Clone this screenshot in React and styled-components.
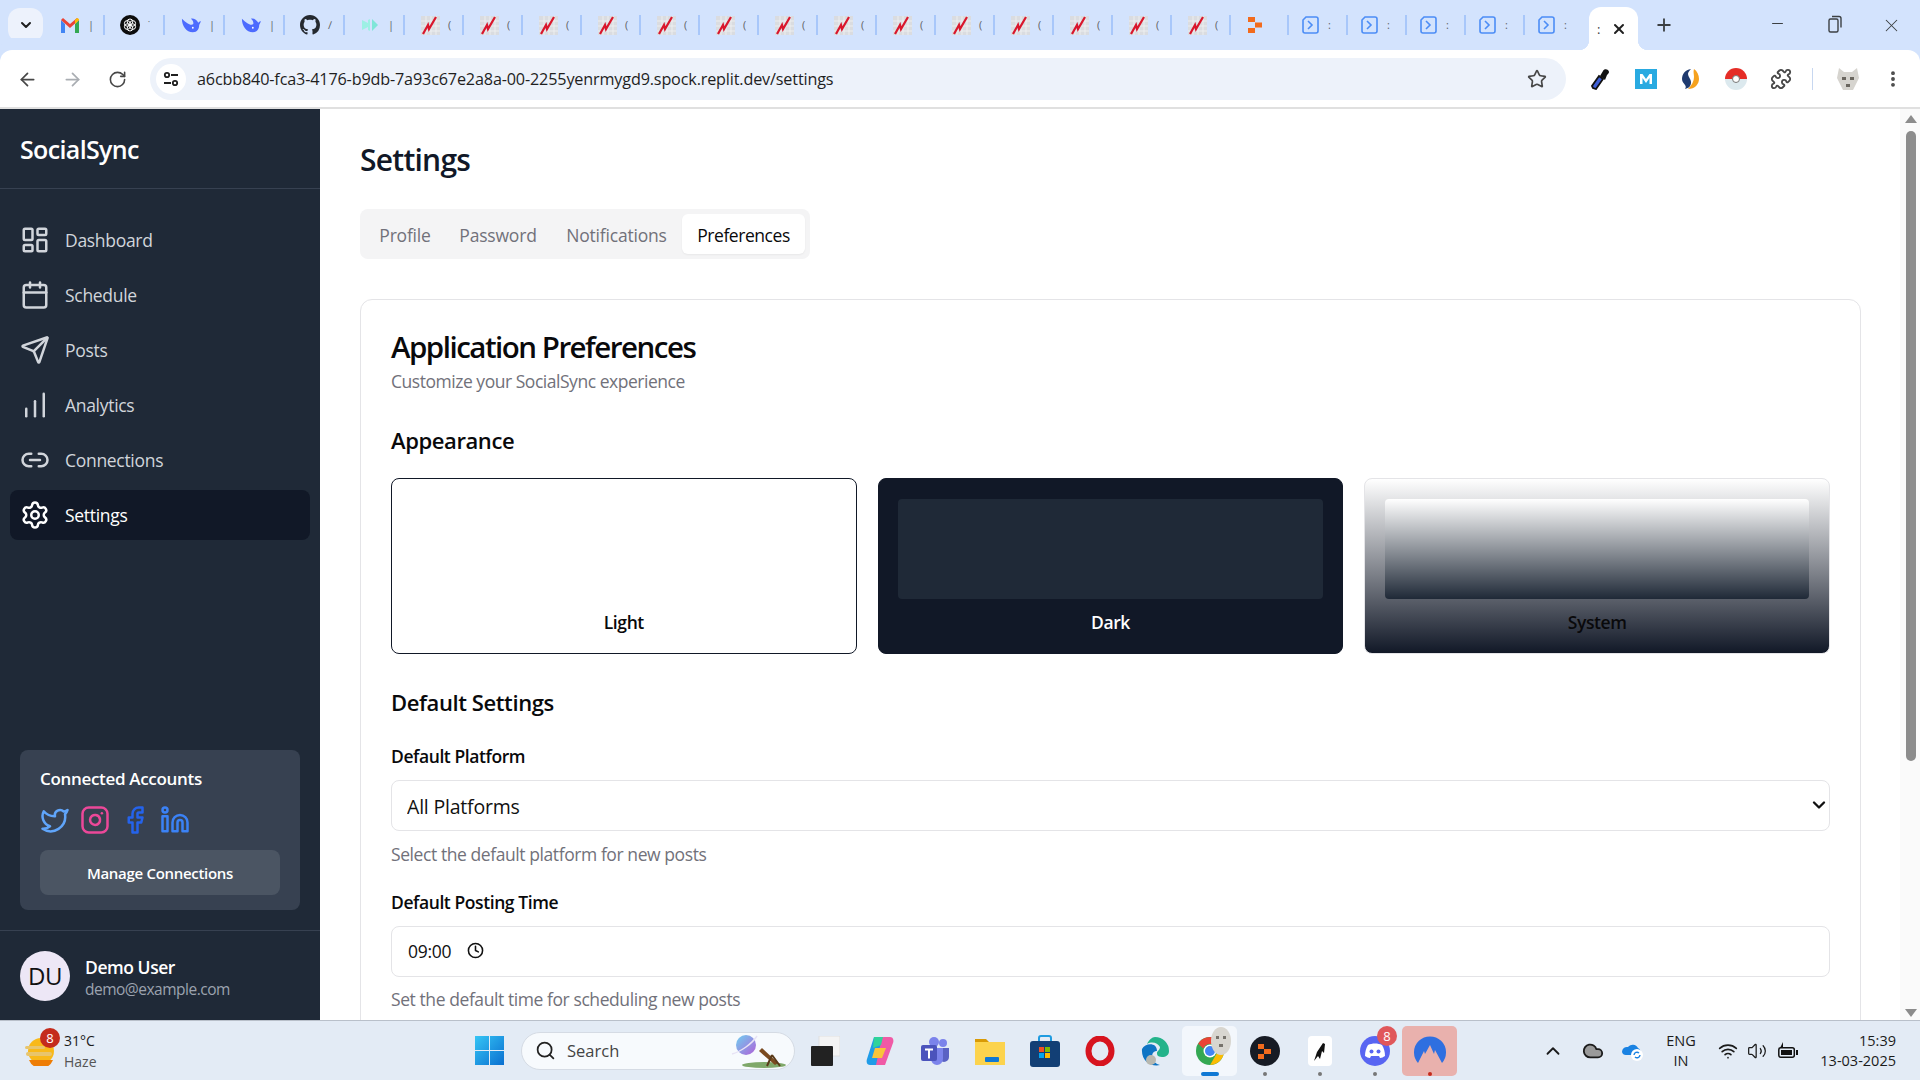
import React from 'react';
import styled, { createGlobalStyle } from 'styled-components';
import {
  LayoutDashboard, Calendar, Send, ChartNoAxesColumnIncreasing, Link2, Settings,
  Twitter, Instagram, Facebook, Linkedin, Clock,
  ArrowLeft, ArrowRight, RotateCw, Star, Puzzle, MoreVertical, X, Plus, Minus,
  ChevronDown, ChevronUp, Search, Cloud, Wifi, Volume2,
} from 'lucide-react';

const GlobalStyle = createGlobalStyle`
  html, body { margin: 0; padding: 0; height: 100%; overflow: hidden; background: #fff; }
  body { font-family: "Open Sans", "Noto Sans", sans-serif; color: #111827; }
  * { box-sizing: border-box; }
`;

const Screen = styled.div`
  width: 1920px;
  height: 1080px;
  display: flex;
  flex-direction: column;
  overflow: hidden;
`;

/* browser chrome */
const TabStrip = styled.div`
  height: 50px;
  flex: none;
  background: #d3e3fd;
  display: flex;
  align-items: center;
  padding-left: 8px;
`;

const TabSearch = styled.div`
  width: 35px;
  height: 34px;
  margin: 0 2px 0 0;
  border-radius: 12px;
  background: #edf2fc;
  display: flex;
  align-items: center;
  justify-content: center;
  color: #1f1f1f;
`;

const Tab = styled.div`
  width: ${p => p.$w}px;
  height: 20px;
  flex: none;
  display: flex;
  align-items: center;
  padding-left: ${p => p.$pad}px;
  border-right: 2px solid ${p => (p.$last ? 'transparent' : '#a8c7fa')};
`;

const TabIconBox = styled.div`
  width: 20px;
  flex: none;
  display: flex;
  justify-content: center;
`;

const TabFrag = styled.span`
  margin-left: 8px;
  font-size: 11px;
  line-height: 12px;
  color: #5f6368;
`;

const ActiveTab = styled.div`
  position: relative;
  align-self: flex-end;
  width: 49px;
  height: 43px;
  margin-left: 5px;
  background: #fff;
  border-radius: 12px 12px 0 0;
  display: flex;
  align-items: center;
  padding-left: 8px;
  gap: 11px;
  font-size: 13px;
  color: #3c4043;
  &::before, &::after {
    content: '';
    position: absolute;
    bottom: 0;
    width: 10px;
    height: 10px;
  }
  &::before { left: -10px; background: radial-gradient(circle at 0 0, transparent 10px, #fff 10.5px); }
  &::after { right: -10px; background: radial-gradient(circle at 100% 0, transparent 10px, #fff 10.5px); }
`;

const NewTab = styled.div`
  margin-left: 16px;
  color: #3c4043;
  display: flex;
`;

const WindowButtons = styled.div`
  margin-left: auto;
  display: flex;
  color: #3c4043;
`;

const WindowButton = styled.div`
  width: 57px;
  display: flex;
  justify-content: center;
`;

const Toolbar = styled.div`
  height: 59px;
  flex: none;
  background: #fff;
  border-bottom: 2px solid #e0e0e0;
  border-radius: 12px 12px 0 0;
  padding-top: 1px;
  display: flex;
  align-items: center;
  color: #474747;
  box-shadow: 0 -12px 0 #d3e3fd;
`;

const NavIcon = styled.div`
  width: 45px;
  display: flex;
  justify-content: center;
  color: ${p => (p.$off ? '#a9adb2' : '#474747')};
  margin-left: ${p => (p.$first ? '5px' : '0')};
`;

const Omnibox = styled.div`
  width: 1416px;
  height: 42px;
  margin-left: 10px;
  border-radius: 21px;
  background: #edf2fa;
  display: flex;
  align-items: center;
  padding: 0 19px 0 6px;
`;

const SiteInfo = styled.div`
  width: 30px;
  height: 30px;
  border-radius: 50%;
  background: #fff;
  display: flex;
  align-items: center;
  justify-content: center;
  color: #1f1f1f;
`;

const Url = styled.div`
  margin-left: 11px;
  flex: 1;
  font-size: 16.2px;
  letter-spacing: -0.16px;
  color: #1f1f1f;
  white-space: nowrap;
`;

const ExtRow = styled.div`
  margin-left: 12px;
  display: flex;
  align-items: center;
`;

const ExtIcon = styled.div`
  width: 45px;
  display: flex;
  justify-content: center;
`;

const ToolSep = styled.div`
  width: 1px;
  height: 22px;
  background: #c7d7f0;
  margin: 0 22px 0 9px;
`;

const Kebab = styled.div`
  margin-left: 22px;
  display: flex;
`;

/* page */
const Body = styled.div`
  flex: 1;
  min-height: 0;
  display: flex;
`;

const Sidebar = styled.aside`
  width: 320px;
  flex: none;
  background: #1f2937;
  display: flex;
  flex-direction: column;
`;

const Brand = styled.div`
  height: 80px;
  flex: none;
  border-bottom: 1px solid #374151;
  padding: 0 20px;
  display: flex;
  align-items: center;
  font-size: 25px;
  font-weight: 600;
  letter-spacing: -0.65px;
  color: #fff;
`;

const Nav = styled.nav`
  padding: 26px 10px 0;
  display: flex;
  flex-direction: column;
  gap: 5px;
`;

const NavItem = styled.div`
  height: 50px;
  padding: 0 10px;
  display: flex;
  align-items: center;
  gap: 15px;
  border-radius: 8px;
  font-size: 17.5px;
  font-weight: 500;
  letter-spacing: -0.3px;
  color: ${p => (p.$active ? '#fff' : '#d1d5db')};
  background: ${p => (p.$active ? '#111827' : 'transparent')};
  svg { flex: none; }
`;

const AccountsCard = styled.div`
  margin: auto 20px 20px;
  height: 160px;
  flex: none;
  background: #374151;
  border-radius: 8px;
  padding: 15px 20px 0;
`;

const AccountsTitle = styled.div`
  font-size: 17px;
  line-height: 28px;
  font-weight: 600;
  letter-spacing: -0.32px;
  color: #fff;
`;

const AccountIcons = styled.div`
  display: flex;
  gap: 10px;
  margin-top: 12px;
`;

const ManageButton = styled.div`
  height: 45px;
  margin-top: 15px;
  border-radius: 8px;
  background: #4b5563;
  display: flex;
  align-items: center;
  justify-content: center;
  font-size: 15px;
  font-weight: 600;
  letter-spacing: -0.3px;
  color: #fff;
`;

const UserRow = styled.div`
  height: 90px;
  flex: none;
  border-top: 1px solid #374151;
  padding: 0 20px;
  display: flex;
  align-items: center;
  gap: 15px;
`;

const Avatar = styled.div`
  width: 50px;
  height: 50px;
  border-radius: 50%;
  background: #ede7f6;
  color: #111;
  font-size: 24px;
  letter-spacing: -0.4px;
  display: flex;
  align-items: center;
  justify-content: center;
`;

const UserInfo = styled.div`
  padding-top: 2px;
`;

const UserName = styled.div`
  font-size: 17.5px;
  line-height: 24px;
  font-weight: 600;
  letter-spacing: -0.45px;
  color: #fff;
`;

const UserMail = styled.div`
  font-size: 15.5px;
  line-height: 20px;
  letter-spacing: -0.5px;
  color: #9ca3af;
`;

const Main = styled.main`
  flex: 1;
  min-width: 0;
  overflow: hidden;
  padding: 31px 39px 0 40px;
  background: #fff;
`;

const PageTitle = styled.h1`
  margin: 0;
  font-size: 30px;
  line-height: 40px;
  font-weight: 600;
  letter-spacing: -0.75px;
  color: #111827;
`;

const Tabs = styled.div`
  width: 450px;
  height: 50px;
  margin-top: 29px;
  padding: 5px;
  background: #f4f4f5;
  border-radius: 8px;
  display: flex;
  align-items: center;
`;

const TabItem = styled.div`
  height: 40px;
  padding-top: 1px;
  display: flex;
  align-items: center;
  justify-content: center;
  width: ${p => p.$w}px;
  border-radius: 6px;
  font-size: 17.5px;
  font-weight: 500;
  letter-spacing: ${p => (p.$active ? '-0.45px' : '-0.2px')};
  color: ${p => (p.$active ? '#09090b' : '#71717a')};
  background: ${p => (p.$active ? '#fff' : 'transparent')};
  box-shadow: ${p => (p.$active ? '0 1px 2px rgba(0,0,0,.05)' : 'none')};
`;

const Card = styled.section`
  margin-top: 40px;
  border: 1px solid #e4e4e7;
  border-radius: 12px;
  padding: 29px 30px 30px;
`;

const CardTitle = styled.h2`
  margin: 0;
  font-size: 29.5px;
  line-height: 36px;
  font-weight: 600;
  letter-spacing: -1.5px;
  color: #09090b;
`;

const CardSub = styled.p`
  margin: 4px 0 0;
  font-size: 17.5px;
  line-height: 24px;
  letter-spacing: -0.47px;
  color: #71717a;
`;

const SectionTitle = styled.h3`
  margin: ${p => p.$top}px 0 0;
  font-size: 22px;
  line-height: 32px;
  font-weight: 600;
  letter-spacing: -0.4px;
  color: #09090b;
`;

const ThemeGrid = styled.div`
  margin-top: 22px;
  display: grid;
  grid-template-columns: repeat(3, 1fr);
  gap: 21px;
`;

const themeBg = {
  light: '#fff',
  dark: '#111827',
  system: 'linear-gradient(to bottom, #fff, #111827)',
};

const innerBg = {
  light: '#fff',
  dark: '#1f2937',
  system: 'linear-gradient(to bottom, #fff, #1f2937)',
};

const ThemeCard = styled.div`
  height: 176px;
  border-radius: 8px;
  padding: 20px ${p => (p.$mode === 'system' ? 20 : 19)}px;
  background: ${p => themeBg[p.$mode]};
  border: 1px solid ${p => (p.$mode === 'system' ? '#e4e4e7' : '#111827')};
`;

const ThemePreview = styled.div`
  height: 100px;
  border-radius: 4px;
  background: ${p => innerBg[p.$mode]};
`;

const ThemeLabel = styled.div`
  margin-top: 11px;
  text-align: center;
  font-size: 17.5px;
  line-height: 24px;
  font-weight: 600;
  letter-spacing: -0.4px;
  color: ${p => (p.$mode === 'dark' ? '#fff' : '#09090b')};
`;

const FieldLabel = styled.label`
  display: block;
  margin-top: ${p => p.$top}px;
  font-size: 17.5px;
  line-height: 24px;
  font-weight: 600;
  letter-spacing: -0.42px;
  color: #09090b;
`;

const SelectWrap = styled.div`
  position: relative;
  margin-top: 12px;
  svg {
    position: absolute;
    right: 1px;
    top: 15px;
    pointer-events: none;
    color: #111;
  }
`;

const Select = styled.select`
  appearance: none;
  display: block;
  width: 100%;
  height: 51px;
  padding: 2px 15px 0;
  border: 1px solid #e4e4e7;
  border-radius: 8px;
  background: #fff;
  font-family: inherit;
  font-size: 19.5px;
  letter-spacing: -0.2px;
  color: #111;
`;

const TimeField = styled.div`
  height: 51px;
  margin-top: 12px;
  padding: 0 16px 2px;
  border: 1px solid #e4e4e7;
  border-radius: 8px;
  display: flex;
  align-items: center;
  gap: 16px;
  font-size: 17.5px;
  letter-spacing: -0.25px;
  color: #111;
`;

const Hint = styled.p`
  margin: ${p => p.$top}px 0 0;
  font-size: 17.5px;
  line-height: 24px;
  letter-spacing: -0.42px;
  color: #71717a;
`;

const ScrollTrack = styled.div`
  width: 20px;
  flex: none;
  background: #fafafa;
  display: flex;
  flex-direction: column;
  align-items: center;
  justify-content: space-between;
  padding: 6px 0 3px 1px;
`;

const ScrollThumb = styled.div`
  width: 10px;
  height: 630px;
  margin-top: 8px;
  border-radius: 5px;
  background: #8c8c8c;
  margin-bottom: auto;
`;

const Arrow = styled.div`
  width: 0;
  height: 0;
  border-left: 6px solid transparent;
  border-right: 6px solid transparent;
  ${p => (p.$down ? 'border-top: 8px solid #8c8c8c;' : 'border-bottom: 8px solid #8c8c8c;')}
`;

/* windows taskbar */
const Taskbar = styled.footer`
  height: 60px;
  flex: none;
  background: #e3ebf5;
  border-top: 1px solid #b9c0ca;
  display: flex;
  align-items: center;
  color: #1b1b1b;
`;

const Weather = styled.div`
  width: 462px;
  flex: none;
  padding-left: 24px;
  display: flex;
  align-items: center;
  gap: 10px;
`;

const WeatherIcon = styled.div`
  position: relative;
  width: 30px;
  height: 30px;
`;

const Badge = styled.span`
  position: absolute;
  width: 20px;
  height: 20px;
  border-radius: 50%;
  background: ${p => p.$bg || '#c42b1c'};
  color: #fff;
  font-size: 13px;
  line-height: 20px;
  text-align: center;
  top: ${p => p.$top}px;
  right: ${p => p.$right}px;
`;

const WeatherText = styled.div`
  font-size: 14px;
  line-height: 21px;
`;

const Muted = styled.div`
  color: #555;
`;

const Slot = styled.div`
  position: relative;
  width: 55px;
  height: 50px;
  flex: none;
  display: flex;
  align-items: center;
  justify-content: center;
  border-radius: 5px;
  background: ${p => p.$bg || 'transparent'};
`;

const Overlay = styled.span`
  position: absolute;
  display: flex;
  top: ${p => p.$top}px;
  right: ${p => p.$right}px;
`;

const Dot = styled.span`
  position: absolute;
  bottom: 0;
  left: 50%;
  transform: translateX(-50%);
  height: 4px;
  border-radius: 2px;
  width: ${p => (p.$wide ? '18px' : '4px')};
  background: ${p => p.$color || '#777'};
`;

const SearchPill = styled.div`
  width: 274px;
  height: 38px;
  margin: 0 2px 0 4px;
  flex: none;
  border-radius: 19px;
  background: #f7fafd;
  border: 1px solid #d5dbe4;
  display: flex;
  align-items: center;
  padding: 0 8px 0 13px;
  gap: 11px;
  font-size: 16.5px;
  color: #444;
`;

const SearchArt = styled.div`
  margin-left: auto;
  display: flex;
`;

const Tray = styled.div`
  margin-left: auto;
  padding-right: 24px;
  display: flex;
  align-items: center;
`;

const TrayIcon = styled.div`
  width: ${p => p.$w}px;
  display: flex;
  justify-content: center;
`;

const TrayText = styled.div`
  font-size: 14.5px;
  line-height: 20px;
  text-align: ${p => p.$align || 'center'};
  width: ${p => p.$w}px;
`;

/* drawn icons */
const GmailIcon = () => (
  <svg width="18" height="15" viewBox="0 0 18 15">
    <path d="M0 2v13h4V6z" fill="#4285f4" />
    <path d="M18 2v13h-4V6z" fill="#34a853" />
    <path d="M0 2l2-2 7 6 7-6 2 2-9 8z" fill="#ea4335" />
    <path d="M14 6l4-4V1l-2-1-2 2z" fill="#fbbc04" />
  </svg>
);

const GptIcon = () => (
  <svg width="20" height="20" viewBox="0 0 20 20">
    <circle cx="10" cy="10" r="10" fill="#0d0d0d" />
    <g fill="none" stroke="#fff" strokeWidth="1">
      <circle cx="10" cy="6.800" r="2.800" />
      <circle cx="7.200" cy="8.400" r="2.800" />
      <circle cx="7.200" cy="11.600" r="2.800" />
      <circle cx="10" cy="13.200" r="2.800" />
      <circle cx="12.800" cy="11.600" r="2.800" />
      <circle cx="12.800" cy="8.400" r="2.800" />
    </g>
  </svg>
);

const WhaleIcon = () => (
  <svg width="22" height="16" viewBox="0 0 22 16">
    <path d="M1 1c0 8 5 15 12 15 5 0 7-4 7-8l2-4c-1 0-2 .5-3 1.500C17 2 14 .5 11 1c2 1.500 3 4 2.500 6C12 8.500 9 7.500 7 6 5 4.500 3 3 1 1z" fill="#4d6bfe" />
    <circle cx="13" cy="11" r="1" fill="#fff" />
  </svg>
);

const GithubIcon = () => (
  <svg width="20" height="20" viewBox="0 0 16 16">
    <path fill="#24292f" d="M8 0C3.58 0 0 3.58 0 8c0 3.54 2.29 6.53 5.47 7.59.4.07.55-.17.55-.38 0-.19-.01-.82-.01-1.49-2.01.37-2.53-.49-2.69-.94-.09-.23-.48-.94-.82-1.13-.28-.15-.68-.52-.01-.53.63-.01 1.08.58 1.23.82.72 1.21 1.87.87 2.33.66.07-.52.28-.87.51-1.07-1.78-.2-3.64-.89-3.64-3.95 0-.87.31-1.59.82-2.15-.08-.2-.36-1.02.08-2.12 0 0 .67-.21 2.2.82.64-.18 1.32-.27 2-.27s1.36.09 2 .27c1.53-1.04 2.2-.82 2.2-.82.44 1.1.16 1.92.08 2.12.51.56.82 1.27.82 2.15 0 3.07-1.87 3.75-3.65 3.95.29.25.54.73.54 1.48 0 1.07-.01 1.93-.01 2.2 0 .21.15.46.55.38A8.01 8.01 0 0 0 16 8c0-4.42-3.58-8-8-8z" />
  </svg>
);

const TealIcon = () => (
  <svg width="18" height="14" viewBox="0 0 18 14">
    <path d="M1 2l6 3V2l2-1v12l-2-1V9l-6 3z" fill="#9df0e4" />
    <path d="M11 1l6 6-6 6z" fill="#7fe6d8" />
  </svg>
);

const ChartTabIcon = () => (
  <svg width="19" height="19" viewBox="0 0 19 19">
    <rect width="19" height="19" fill="#dadce0" />
    <path d="M0 5h19M0 10h19M0 15h19M5 0v19M10 0v19M15 0v19" stroke="#f1f3f4" strokeWidth=".8" />
    <path d="M2 18l5-9 1 4 7-12" fill="none" stroke="#d9172c" strokeWidth="2.200" />
  </svg>
);

const OrangeIcon = () => (
  <svg width="14" height="16" viewBox="0 0 14 16">
    <g fill="#f26b1d">
      <rect x="0" y="0" width="7" height="5" />
      <rect x="7" y="5.500" width="7" height="5" />
      <rect x="0" y="11" width="7" height="5" />
    </g>
  </svg>
);

const TerminalIcon = () => (
  <svg width="17" height="18" viewBox="0 0 17 18" fill="none" stroke="#4c8df6" strokeWidth="1.600">
    <path d="M4 1h10a2 2 0 0 1 2 2v12a2 2 0 0 1-2 2H3a2 2 0 0 1-2-2V4z" />
    <path d="M6 5l4 4-4 4" />
  </svg>
);

// [icon, cut-off title, tab width, left padding]
const tabIcons = [
  [GmailIcon, '|', 60, 15], [GptIcon, '˙', 60, 15], [WhaleIcon, '|', 60, 16], [WhaleIcon, '|', 60, 16],
  [GithubIcon, '∕', 60, 15], [TealIcon, '|', 60, 15],
  ...Array(14).fill([ChartTabIcon, '(', 59, 15]),
  [OrangeIcon, '', 58, 14],
  ...Array(4).fill([TerminalIcon, ':', 59, 11]),
  [TerminalIcon, ':', 59, 11, true],
];

const TuneIcon = () => (
  <svg width="18" height="18" viewBox="0 0 18 18" fill="none" stroke="#1f1f1f" strokeWidth="1.800">
    <circle cx="5" cy="5" r="2.200" />
    <path d="M9 5h7M2 13h7" />
    <circle cx="13" cy="13" r="2.200" />
  </svg>
);

const Dropper = () => (
  <svg width="20" height="22" viewBox="0 0 20 22">
    <path d="M2 20l-1-2 7-10 4 3-7 10z" fill="#3f5fd6" stroke="#111" strokeWidth="1.800" />
    <path d="M9 8l3-5c1-3 6-2 6 1 0 1-1 2-2 3l-2 5z" fill="#111" />
  </svg>
);

const MemIcon = () => (
  <svg width="22" height="20" viewBox="0 0 22 20">
    <rect width="22" height="20" fill="#29aae1" />
    <path d="M5 15V5h2.500L11 10l3.500-5H17v10h-2.500V9L11 14 7.500 9v6z" fill="#fff" />
  </svg>
);

const SwirlIcon = () => (
  <svg width="19" height="20" viewBox="0 0 19 20">
    <path d="M10 0C4 1 1 5 1 10c0 3 2 4 3 6 1 1 1 3 0 4 4-1 6-3 6-7 0-3-3-5-3-8 0-2 2-4 3-5z" fill="#1f3a6e" />
    <path d="M13 0c-1 3 0 5 0 8 0 4-2 8-6 12 7 0 11-5 11-10 0-4-2-8-5-10z" fill="#f6a21e" />
  </svg>
);

const Pokeball = () => (
  <svg width="22" height="22" viewBox="0 0 22 22">
    <path d="M0 11a11 11 0 0 1 22 0z" fill="#e52d27" />
    <path d="M0 11a11 11 0 0 0 22 0z" fill="#dce9ee" />
    <circle cx="11" cy="11" r="3.500" fill="#fff" stroke="#777" />
  </svg>
);

const FaceAvatar = () => (
  <svg width="26" height="24" viewBox="0 0 26 24">
    <path d="M4 1l5 4h8l5-4 2 10-6 12H8L2 11z" fill="#d6d4cf" />
    <path d="M7 10h4v3H7zM15 10h4v3h-4zM11 17h4v3h-4z" fill="#6a665f" />
  </svg>
);

const WeatherGlyph = () => (
  <svg width="30" height="30" viewBox="0 0 30 30">
    <circle cx="17" cy="15" r="13" fill="#f8b91a" />
    <path d="M5 24h24a13 13 0 0 1-24 0z" fill="#ee7d06" />
    <rect x="1" y="10" width="20" height="3" rx="1.500" fill="#e8c56c" />
    <rect x="2" y="16" width="26" height="4" rx="2" fill="#e8c56c" />
  </svg>
);

const WindowsLogo = () => (
  <svg width="29" height="29" viewBox="0 0 29 29">
    <defs>
      <linearGradient id="win" x1="0" y1="0" x2="1" y2="1">
        <stop offset="0" stopColor="#35c5f5" />
        <stop offset="1" stopColor="#0a6fd0" />
      </linearGradient>
    </defs>
    <path fill="url(#win)" d="M0 0h14v14H0zM15 0h14v14H15zM0 15h14v14H0zM15 15h14v14H15z" />
  </svg>
);

const SearchArtIcon = () => (
  <svg width="60" height="34" viewBox="0 0 60 34">
    <defs>
      <linearGradient id="planet" x1="0" y1="0" x2="1" y2="1">
        <stop offset="0" stopColor="#6fd0f0" />
        <stop offset="1" stopColor="#b060d8" />
      </linearGradient>
    </defs>
    <ellipse cx="38" cy="31" rx="22" ry="3" fill="#7fa86a" />
    <circle cx="20" cy="11" r="10" fill="url(#planet)" />
    <path d="M6 20C14 18 26 10 31 2" fill="none" stroke="#e7e2f5" strokeWidth="1.500" />
    <path d="M36 14l16 15-3 2-16-14z" fill="#7a4a20" />
    <path d="M46 21l-5 11M46 21l8 11" stroke="#5a3a1a" strokeWidth="2" />
  </svg>
);

const TaskView = () => (
  <svg width="30" height="30" viewBox="0 0 30 30">
    <rect x="9" y="0" width="21" height="20" fill="#f4f4f4" stroke="#e0e0e0" />
    <rect x="1" y="10" width="22" height="20" rx="1" fill="#222" />
  </svg>
);

const CopilotIcon = () => (
  <svg width="30" height="30" viewBox="0 0 30 30">
    <path d="M9 1h9l-6 28H5c-3 0-4-3-3-6z" fill="#1f9ce8" />
    <path d="M20 29h-9l6-28h8c3 0 4 3 3 6z" fill="#f05aa6" />
    <path d="M10 12h11l-4 10H7z" fill="#f9c43a" />
    <path d="M9 1h9l-2 8-8 3z" fill="#2fd39a" />
  </svg>
);

const TeamsIcon = () => (
  <svg width="30" height="28" viewBox="0 0 30 28">
    <circle cx="23" cy="6" r="4" fill="#7b83eb" />
    <circle cx="14" cy="5" r="5" fill="#7b83eb" />
    <path d="M18 11h11v9a5 5 0 0 1-10 0z" fill="#5a62c3" />
    <path d="M9 11h14v11a6 6 0 0 1-12 0z" fill="#7b83eb" />
    <rect x="1" y="8" width="16" height="16" rx="2" fill="#4b53bc" />
    <path d="M5 11.500h8v2h-3v8H8v-8H5z" fill="#fff" />
  </svg>
);

const FolderIcon = () => (
  <svg width="30" height="30" viewBox="0 0 30 30">
    <path d="M0 3h11l3 3h-14z" fill="#d99a05" />
    <rect y="6" width="30" height="23" fill="#fcd34d" />
    <rect x="10" y="21" width="14" height="5" rx="1" fill="#0f78d4" />
  </svg>
);

const StoreIcon = () => (
  <svg width="30" height="32" viewBox="0 0 30 32">
    <path d="M9 6V3a2 2 0 0 1 2-2h8a2 2 0 0 1 2 2v3" fill="none" stroke="#1e9be0" strokeWidth="2" />
    <rect y="6" width="30" height="26" rx="3" fill="#123f75" />
    <rect x="9" y="12" width="5" height="5" fill="#f25022" />
    <rect x="15" y="12" width="5" height="5" fill="#7fba00" />
    <rect x="9" y="18" width="5" height="5" fill="#00a4ef" />
    <rect x="15" y="18" width="5" height="5" fill="#ffb900" />
  </svg>
);

const OperaIcon = () => (
  <svg width="30" height="30" viewBox="0 0 30 30">
    <ellipse cx="15" cy="15" rx="11.500" ry="12.500" fill="none" stroke="#d7141f" strokeWidth="6" />
  </svg>
);

const EdgeIcon = () => (
  <svg width="30" height="30" viewBox="0 0 30 30">
    <path d="M15 1a14 14 0 0 1 14 14c0 4-3 6-7 6-5 0-5-3-5-4 0-2 3-3 3-6-2-4-8-6-13-3C9 4 12 1 15 1z" fill="#23b38a" />
    <path d="M2 13c3-6 15-7 15 2-3 0-5 2-5 6 0 4 4 7 8 8-9 2-19-4-18-16z" fill="#0e74c4" />
    <circle cx="11" cy="24" r="5" fill="#b8b8b0" />
  </svg>
);

const ChromeIcon = () => (
  <svg width="30" height="30" viewBox="0 0 30 30">
    <circle cx="15" cy="15" r="14" fill="#34a853" />
    <path d="M15 1a14 14 0 0 1 12.100 7H15a7 7 0 0 0-6.600 4.600L3.200 7.700A14 14 0 0 1 15 1z" fill="#ea4335" />
    <path d="M27.100 8a14 14 0 0 1-12 21l6-10.500A7 7 0 0 0 21 8z" fill="#fbbc04" />
    <circle cx="15" cy="15" r="6.500" fill="#fff" />
    <circle cx="15" cy="15" r="5" fill="#4285f4" />
  </svg>
);

const ProfileBubble = () => (
  <svg width="20" height="28" viewBox="0 0 20 28">
    <ellipse cx="10" cy="14" rx="10" ry="14" fill="#d8d6d0" />
    <path d="M5 9h3v3H5zM12 9h3v3h-3zM8 17h4v3H8z" fill="#77736c" />
  </svg>
);

const DarkOrange = () => (
  <svg width="30" height="30" viewBox="0 0 30 30">
    <circle cx="15" cy="15" r="15" fill="#171b24" />
    <g fill="#f26b1d">
      <rect x="8" y="8" width="6" height="5" />
      <rect x="14" y="13" width="7" height="5" />
      <rect x="8" y="18" width="6" height="5" />
    </g>
  </svg>
);

const BlackApp = () => (
  <svg width="24" height="30" viewBox="0 0 24 30">
    <rect width="24" height="30" rx="4" fill="#fff" />
    <path d="M6 25l3-9 6-9 2 1-1 9-2-2-2 8-2-3z" fill="#111" />
  </svg>
);

const DiscordIcon = () => (
  <svg width="30" height="30" viewBox="0 0 30 30">
    <circle cx="15" cy="15" r="15" fill="#5865f2" />
    <path d="M8 9c4-2 10-2 14 0 2 3 3 7 3 11-2 1-3 2-5 2l-1-2H11l-1 2c-2 0-3-1-5-2 0-4 1-8 3-11z" fill="#fff" />
    <circle cx="11.500" cy="15.500" r="2" fill="#5865f2" />
    <circle cx="18.500" cy="15.500" r="2" fill="#5865f2" />
  </svg>
);

const NordIcon = () => (
  <svg width="32" height="32" viewBox="0 0 32 32">
    <path d="M4 28A16 16 0 1 1 28 28L21 15l-1 4-4-9-5 9-1-3z" fill="#2f6fe0" />
  </svg>
);

const OneDriveSync = () => (
  <svg width="22" height="20" viewBox="0 0 22 20">
    <path d="M1 11a5 5 0 0 1 6-5 6 6 0 0 1 10 1 4 4 0 0 1 1 7H5a4 4 0 0 1-4-3z" fill="#1a82e2" />
    <circle cx="16" cy="14" r="6" fill="#fff" />
    <path d="M13 14a3 3 0 0 1 5-2M19 14a3 3 0 0 1-5 2" stroke="#1a82e2" strokeWidth="1.400" fill="none" />
  </svg>
);

const BatteryIcon = () => (
  <svg width="22" height="18" viewBox="0 0 22 18">
    <path d="M6 0L2 8h3l-1 4 5-7H6z" fill="#111" />
    <rect x="1.800" y="5.800" width="15.500" height="9.500" rx="2" fill="#e3ebf5" stroke="#111" strokeWidth="1.500" />
    <rect x="4" y="8" width="11" height="5" fill="#111" />
    <rect x="19" y="8" width="2" height="5" fill="#111" />
  </svg>
);

const navItems = [
  ['Dashboard', LayoutDashboard],
  ['Schedule', Calendar],
  ['Posts', Send],
  ['Analytics', ChartNoAxesColumnIncreasing],
  ['Connections', Link2],
  ['Settings', Settings],
];

const taskbarApps = [
  { Icon: TaskView },
  { Icon: CopilotIcon },
  { Icon: TeamsIcon },
  { Icon: FolderIcon },
  { Icon: StoreIcon },
  { Icon: OperaIcon },
  { Icon: EdgeIcon },
  { Icon: ChromeIcon, bg: '#f3f7fc', dot: '#0f78d4', wide: true, bubble: true },
  { Icon: DarkOrange, dot: '#777' },
  { Icon: BlackApp, dot: '#777' },
  { Icon: DiscordIcon, dot: '#777', badge: '8' },
  { Icon: NordIcon, bg: '#e9b1ad', dot: '#c42b1c' },
];

export default function App() {
  return (
    <Screen>
      <GlobalStyle />
      <TabStrip>
        <TabSearch><ChevronDown size={16} strokeWidth={3} /></TabSearch>
        {tabIcons.map(([Icon, frag, w, pad, last], i) => (
          <Tab key={i} $w={w} $pad={pad} $last={last}>
            <TabIconBox><Icon /></TabIconBox>
            <TabFrag>{frag}</TabFrag>
          </Tab>
        ))}
        <ActiveTab>
          <span>:</span>
          <X size={16} strokeWidth={3} color="#1f1f1f" />
        </ActiveTab>
        <NewTab><Plus size={20} strokeWidth={2.2} /></NewTab>
        <WindowButtons>
          <WindowButton><Minus size={17} strokeWidth={1.5} /></WindowButton>
          <WindowButton>
            <svg width="16" height="18" viewBox="0 0 16 18" fill="none" stroke="#3c4043" strokeWidth="1.4">
              <rect x="2" y="4" width="9" height="13" rx="1.5" />
              <path d="M5 1.500h7a2 2 0 0 1 2 2v9" />
            </svg>
          </WindowButton>
          <WindowButton><X size={21} strokeWidth={1.2} /></WindowButton>
        </WindowButtons>
      </TabStrip>

      <Toolbar>
        <NavIcon $first><ArrowLeft size={21} /></NavIcon>
        <NavIcon $off><ArrowRight size={21} /></NavIcon>
        <NavIcon><RotateCw size={19} /></NavIcon>
        <Omnibox>
          <SiteInfo><TuneIcon /></SiteInfo>
          <Url>a6cbb840-fca3-4176-b9db-7a93c67e2a8a-00-2255yenrmygd9.spock.replit.dev/settings</Url>
          <Star size={20} />
        </Omnibox>
        <ExtRow>
          <ExtIcon><Dropper /></ExtIcon>
          <ExtIcon><MemIcon /></ExtIcon>
          <ExtIcon><SwirlIcon /></ExtIcon>
          <ExtIcon><Pokeball /></ExtIcon>
          <ExtIcon><Puzzle size={22} /></ExtIcon>
        </ExtRow>
        <ToolSep />
        <FaceAvatar />
        <Kebab><MoreVertical size={20} strokeWidth={2.6} /></Kebab>
      </Toolbar>

      <Body>
        <Sidebar>
          <Brand>SocialSync</Brand>
          <Nav>
            {navItems.map(([label, Icon]) => (
              <NavItem key={label} $active={label === 'Settings'}>
                <Icon size={30} />
                {label}
              </NavItem>
            ))}
          </Nav>
          <AccountsCard>
            <AccountsTitle>Connected Accounts</AccountsTitle>
            <AccountIcons>
              <Twitter size={30} color="#60a5fa" />
              <Instagram size={30} color="#ec4899" />
              <Facebook size={30} color="#2563eb" />
              <Linkedin size={30} color="#3b82f6" />
            </AccountIcons>
            <ManageButton>Manage Connections</ManageButton>
          </AccountsCard>
          <UserRow>
            <Avatar>DU</Avatar>
            <UserInfo>
              <UserName>Demo User</UserName>
              <UserMail>demo@example.com</UserMail>
            </UserInfo>
          </UserRow>
        </Sidebar>

        <Main>
          <PageTitle>Settings</PageTitle>
          <Tabs>
            <TabItem $w={80}>Profile</TabItem>
            <TabItem $w={106}>Password</TabItem>
            <TabItem $w={131}>Notifications</TabItem>
            <TabItem $w={123} $active>Preferences</TabItem>
          </Tabs>
          <Card>
            <CardTitle>Application Preferences</CardTitle>
            <CardSub>Customize your SocialSync experience</CardSub>
            <SectionTitle $top={31}>Appearance</SectionTitle>
            <ThemeGrid>
              {['light', 'dark', 'system'].map(mode => (
                <ThemeCard key={mode} $mode={mode}>
                  <ThemePreview $mode={mode} />
                  <ThemeLabel $mode={mode}>{mode[0].toUpperCase() + mode.slice(1)}</ThemeLabel>
                </ThemeCard>
              ))}
            </ThemeGrid>
            <SectionTitle $top={32}>Default Settings</SectionTitle>
            <FieldLabel $top={26}>Default Platform</FieldLabel>
            <SelectWrap>
              <Select defaultValue="all">
                <option value="all">All Platforms</option>
              </Select>
              <ChevronDown size={20} strokeWidth={2.8} />
            </SelectWrap>
            <Hint $top={11}>Select the default platform for new posts</Hint>
            <FieldLabel $top={24}>Default Posting Time</FieldLabel>
            <TimeField>
              09:00
              <Clock size={17} strokeWidth={2.2} />
            </TimeField>
            <Hint $top={10}>Set the default time for scheduling new posts</Hint>
          </Card>
        </Main>

        <ScrollTrack>
          <Arrow />
          <ScrollThumb />
          <Arrow $down />
        </ScrollTrack>
      </Body>

      <Taskbar>
        <Weather>
          <WeatherIcon>
            <WeatherGlyph />
            <Badge $top={-8} $right={-6}>8</Badge>
          </WeatherIcon>
          <WeatherText>
            <div>31°C</div>
            <Muted>Haze</Muted>
          </WeatherText>
        </Weather>
        <Slot><WindowsLogo /></Slot>
        <SearchPill>
          <Search size={21} color="#222" />
          Search
          <SearchArt><SearchArtIcon /></SearchArt>
        </SearchPill>
        {taskbarApps.map(({ Icon, bg, dot, wide, badge, bubble }, i) => (
          <Slot key={i} $bg={bg}>
            <Icon />
            {dot && <Dot $color={dot} $wide={wide} />}
            {badge && <Badge $top={0} $right={5} $bg="#e0575a">{badge}</Badge>}
            {bubble && <Overlay $top={1} $right={6}><ProfileBubble /></Overlay>}
          </Slot>
        ))}
        <Tray>
          <TrayIcon $w={34}><ChevronUp size={22} strokeWidth={2} /></TrayIcon>
          <TrayIcon $w={46}><Cloud size={22} fill="#9a9a9a" /></TrayIcon>
          <TrayIcon $w={32}><OneDriveSync /></TrayIcon>
          <TrayText $w={66}>ENG<br />IN</TrayText>
          <TrayIcon $w={28}><Wifi size={20} /></TrayIcon>
          <TrayIcon $w={30}><Volume2 size={20} strokeWidth={1.5} /></TrayIcon>
          <TrayIcon $w={32}><BatteryIcon /></TrayIcon>
          <TrayText $w={92} $align="right">15:39<br />13-03-2025</TrayText>
        </Tray>
      </Taskbar>
    </Screen>
  );
}
